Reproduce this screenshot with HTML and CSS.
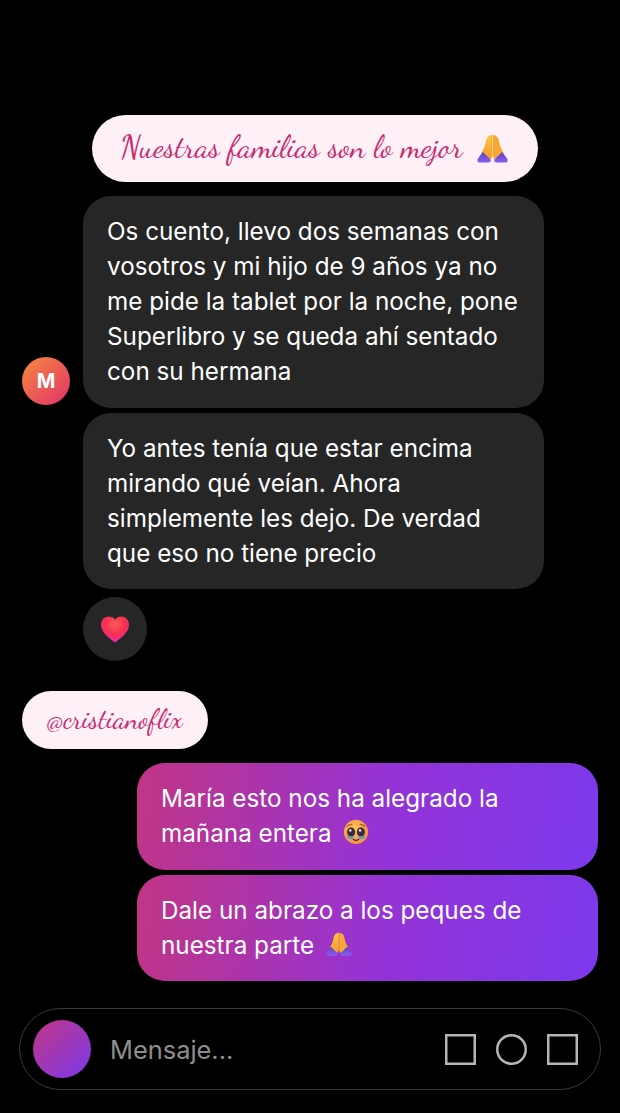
FILE: index.html
```html
<!DOCTYPE html>
<html>
<head>
    <title>Chat</title>
    <link rel="stylesheet" href="styles.css">
</head>
<body>
    <svg class="defs" width="0" height="0">
        <defs>
            <linearGradient id="finger" x1="0" y1="0" x2="0" y2="1">
                <stop offset="0" stop-color="#ffc23d"/>
                <stop offset="1" stop-color="#f79a2b"/>
            </linearGradient>
            <linearGradient id="cuff" x1="0" y1="0" x2="0" y2="1">
                <stop offset="0" stop-color="#5b45c0"/>
                <stop offset="1" stop-color="#8a5cf0"/>
            </linearGradient>
            <radialGradient id="heart" cx="0.5" cy="0.3" r="0.75">
                <stop offset="0" stop-color="#ff5a5a"/>
                <stop offset="0.5" stop-color="#f5304f"/>
                <stop offset="1" stop-color="#e92fc0"/>
            </radialGradient>
            <radialGradient id="face" cx="0.45" cy="0.4" r="0.65">
                <stop offset="0" stop-color="#ffc95e"/>
                <stop offset="1" stop-color="#f58a3c"/>
            </radialGradient>
            <symbol id="pray" viewBox="0 0 32 32">
                <path d="M15.800 2c-2.800 0-5 1.500-6 4.500L8 14l-3.500 7 5.500 4 4 2 1.800-3z" fill="url(#finger)"/>
                <path d="M16.200 2c2.800 0 5 1.500 6 4.500L24 14l3.500 7-5.500 4-4 2-1.800-3z" fill="#f8a735"/>
                <path d="M6 19.500.8 26.500c-1 2 0 4 2 4h9c2 0 3-1.500 2-3.500z" fill="url(#cuff)"/>
                <path d="M26 19.500l5.200 7c1 2 0 4-2 4h-9c-2 0-3-1.500-2-3.500z" fill="url(#cuff)"/>
            </symbol>
        </defs>
    </svg>

    <div class="banner">
        <span class="script-line">Nuestras familias son lo mejor</span>
        <svg class="emoji-big"><use href="#pray"/></svg>
    </div>

    <div class="thread">
        <div class="avatar">M</div>
        <div class="bubbles">
            <div class="bubble">Os cuento, llevo dos semanas con vosotros y mi hijo de 9 años ya no me pide la tablet por la noche, pone Superlibro y se queda ahí sentado con su hermana</div>
            <div class="bubble">Yo antes tenía que estar encima mirando qué veían. Ahora simplemente les dejo. De verdad que eso no tiene precio</div>
        </div>
    </div>

    <div class="reaction">
        <svg width="30" height="27" viewBox="0 0 30 28">
            <path d="M15 27.500C9 23.500 .5 17 .5 9.200.5 4 4.200.5 8.500.5c2.800 0 5 1.100 6.500 3.300C16.500 1.600 18.700.5 21.500.5c4.300 0 8 3.500 8 8.700C29.500 17 21 23.500 15 27.500z" fill="url(#heart)"/>
        </svg>
    </div>

    <div class="tag"><span class="script-line">@cristianoflix</span></div>

    <div class="sent">
        <div class="bubble-sent">María esto nos ha alegrado la mañana entera
            <svg class="emoji" viewBox="0 0 32 32">
                <circle cx="16" cy="16" r="15" fill="url(#face)"/>
                <ellipse cx="10" cy="16" rx="5" ry="5.500" fill="#3a2a3e"/>
                <ellipse cx="22" cy="16" rx="5" ry="5.500" fill="#3a2a3e"/>
                <circle cx="9" cy="14" r="1.500" fill="#fff"/>
                <circle cx="21" cy="14" r="1.500" fill="#fff"/>
                <path d="M5 20c1 3 6 3 8 0v3c-2 2-6 2-8 0z" fill="#4a9be8"/>
                <path d="M19 20c2 3 7 3 8 0v3c-2 2-6 2-8 0z" fill="#4a9be8"/>
                <path d="M12.500 25c2 1.500 5 1.500 7 0" fill="none" stroke="#4a2a2a" stroke-width="1.500" stroke-linecap="round"/>
                <path d="M5 9c1.500-1.500 3.500-2.500 6-2.500M27 9c-1.500-1.500-3.500-2.500-6-2.500" fill="none" stroke="#b5562a" stroke-width="1.500" stroke-linecap="round"/>
            </svg>
        </div>
        <div class="bubble-sent">Dale un abrazo a los peques de nuestra parte
            <svg class="emoji"><use href="#pray"/></svg>
        </div>
    </div>

    <div class="composer">
        <div class="camera"></div>
        <div class="placeholder">Mensaje...</div>
        <div class="tools">
            <svg class="tool" viewBox="0 0 31 31"><rect x="1.250" y="1.250" width="28.500" height="28.500"/></svg>
            <svg class="tool" viewBox="0 0 31 31"><circle cx="15.500" cy="15.500" r="14.250"/></svg>
            <svg class="tool" viewBox="0 0 31 31"><rect x="1.250" y="1.250" width="28.500" height="28.500"/></svg>
        </div>
    </div>
</body>
</html>
```

FILE: styles.css
```css
body {
    margin: 0;
    height: 1113px;
    padding-top: 115px;
    box-sizing: border-box;
    overflow: hidden;
    background: #000;
    font-family: Inter, "Noto Sans", sans-serif;
    color: #fff;
}

.defs {
    display: block;
}

.banner {
    display: flex;
    align-items: center;
    justify-content: center;
    gap: 14px;
    width: 446px;
    height: 67px;
    margin-left: 92px;
    padding-right: 2px;
    box-sizing: border-box;
    background: #fdf0f6;
    border-radius: 34px;
    color: #c9296f;
    font-family: "Dancing Script", cursive;
    font-size: 31.7px;
}

.script-line {
    padding-bottom: 3px;
}

.emoji-big {
    width: 31px;
    height: 31px;
}

.thread {
    display: flex;
    align-items: flex-start;
    gap: 13px;
    margin: 14px 0 0 22px;
}

.avatar {
    display: flex;
    align-items: center;
    justify-content: center;
    flex: none;
    width: 48px;
    height: 48px;
    margin-top: 161px;
    border-radius: 50%;
    background: linear-gradient(135deg, #f58b3c, #e1306c);
    font-size: 20px;
    font-weight: 700;
}

.bubbles {
    display: flex;
    flex-direction: column;
    gap: 5px;
    width: 461px;
}

.bubble {
    padding: 18.3px 24px;
    background: #262626;
    border-radius: 28px;
    font-size: 24.25px;
    line-height: 35px;
}

.reaction {
    display: flex;
    align-items: center;
    justify-content: center;
    width: 64px;
    height: 64px;
    margin: 8px 0 0 83px;
    background: #262626;
    border-radius: 50%;
}

.tag {
    display: flex;
    align-items: center;
    justify-content: center;
    width: 186px;
    height: 58px;
    margin: 30px 0 0 22px;
    background: #fdf0f6;
    border-radius: 29px;
    color: #c9296f;
    font-family: "Dancing Script", cursive;
    font-size: 28px;
}

.sent {
    display: flex;
    flex-direction: column;
    gap: 5px;
    width: 461px;
    margin: 14px 0 0 137px;
}

.bubble-sent {
    padding: 18.3px 24px;
    background: linear-gradient(100deg, #c13584, #9333d8 55%, #7c3aed);
    border-radius: 28px;
    font-size: 24.25px;
    line-height: 35px;
}

.emoji {
    width: 26px;
    height: 26px;
    margin-left: 5px;
    vertical-align: -3px;
}

.composer {
    display: flex;
    align-items: center;
    width: 582px;
    height: 82px;
    margin: 27px 0 0 19px;
    padding: 0 22px 0 13px;
    box-sizing: border-box;
    border: 1px solid #3a3a3a;
    border-radius: 41px;
}

.camera {
    flex: none;
    width: 58px;
    height: 58px;
    border-radius: 50%;
    background: linear-gradient(135deg, #c13584, #7c3aed);
}

.placeholder {
    flex: 1;
    margin-left: 19px;
    color: #8e8e8e;
    font-size: 25.4px;
}

.tools {
    display: flex;
    gap: 20px;
}

.tool {
    width: 31px;
    height: 31px;
    fill: none;
    stroke: #b5b5b5;
    stroke-width: 2.5;
}
```
